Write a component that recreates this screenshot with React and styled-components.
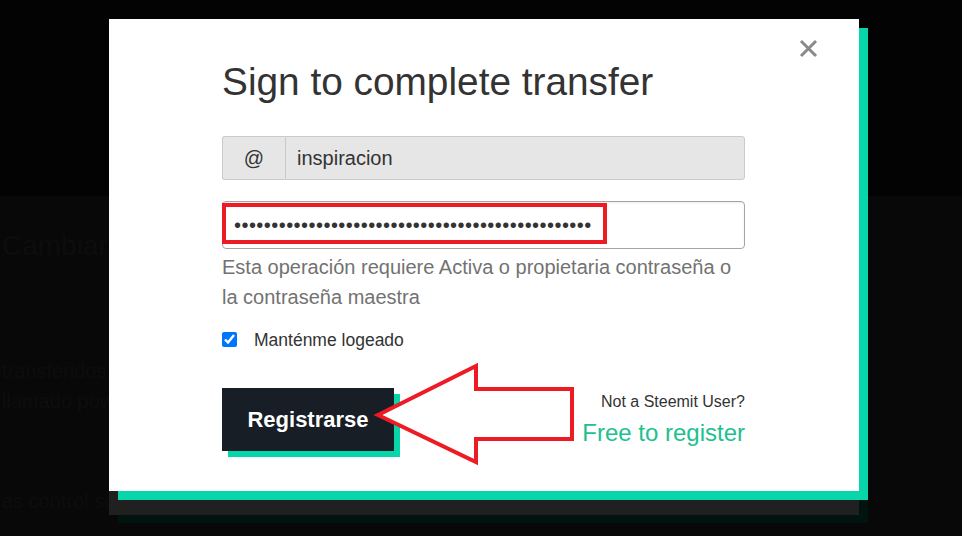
import React from "react";
import styled, { createGlobalStyle } from "styled-components";

const GlobalStyle = createGlobalStyle`
  html, body { margin: 0; padding: 0; background: #050505; }
  body { font-family: "Liberation Sans", Arial, sans-serif; }
  * { box-sizing: border-box; }
`;

const Screen = styled.div`
  position: relative;
  width: 962px;
  height: 536px;
  overflow: hidden;
  background: #080808;
`;

const PageHeader = styled.header`
  height: 196px;
  background: #030303;
`;

const PageBody = styled.main`
  display: flex;
  flex-direction: column;
  padding: 30px 0 0 2px;
  color: #0d0d0d;
`;

const BgHeading = styled.div`
  font-size: 28px;
  line-height: 40px;
  margin-bottom: 90px;
`;

const BgLine = styled.div`
  font-size: 20px;
  line-height: 30px;
  margin-top: ${(p) => p.$mt || 0}px;
`;

const Overlay = styled.div`
  position: absolute;
  inset: 0;
  padding: 19px 0 0 109px;
`;

const Modal = styled.div`
  position: relative;
  width: 750px;
  height: 472px;
  background: #ffffff;
  box-shadow: 9px 9px 0 #06d6a9, 0 24px 0 #202020, 9px 32px 0 #01140f;
  padding: 39px 114px 0 113px;
  display: flex;
  flex-direction: column;
`;

const CloseButton = styled.button`
  position: absolute;
  left: 690px;
  top: 20px;
  width: 19px;
  height: 19px;
  padding: 0;
  border: 0;
  background: transparent;
  display: flex;
  align-items: center;
  justify-content: center;
`;

const Title = styled.h1`
  margin: 0;
  font-size: 38.8px;
  line-height: 47px;
  font-weight: 400;
  color: #333333;
`;

const InputGroup = styled.div`
  margin-top: 31px;
  display: flex;
  height: 44px;
`;

const Addon = styled.span`
  width: 63px;
  display: flex;
  align-items: center;
  justify-content: center;
  background: #e6e6e6;
  border: 1px solid #cacaca;
  border-right: 0;
  border-radius: 3px 0 0 3px;
  font-size: 20px;
  color: #333;
`;

const Field = styled.input`
  flex: 1;
  min-width: 0;
  height: 100%;
  border: 1px solid #cacaca;
  border-radius: ${(p) => p.$radius || "0 3px 3px 0"};
  background: ${(p) => (p.disabled ? "#e6e6e6" : "#fff")};
  font-family: "Liberation Sans", Arial, sans-serif;
  font-size: 20px;
  color: #333;
  padding: 0 11px;
  outline: none;
`;

const PasswordWrap = styled.div`
  position: relative;
  margin-top: 21px;
  height: 48px;
  display: flex;
`;

const PasswordField = styled(Field)`
  border-color: #a5a5a5;
  letter-spacing: 0.45px;
  color: #333;
  box-shadow: inset 0 1px 2px rgba(0, 0, 0, 0.08);
`;

const Highlight = styled.div`
  position: absolute;
  left: 0;
  top: 2px;
  width: 385px;
  height: 41px;
  border: 4px solid #ed1c24;
  pointer-events: none;
`;

const Help = styled.p`
  margin: 3px 0 0;
  font-size: 20px;
  line-height: 30px;
  color: #727272;
`;

const CheckRow = styled.label`
  margin-top: 18px;
  height: 20px;
  display: flex;
  align-items: center;
  gap: 17px;
  font-size: 17.5px;
  color: #333;
`;

const Check = styled.input`
  width: 15px;
  height: 15px;
  margin: 0;
  accent-color: #0075ff;
  position: relative;
  top: -1px;
`;

const ActionRow = styled.div`
  position: relative;
  margin-top: 38px;
  display: flex;
  justify-content: space-between;
  align-items: center;
`;

const SubmitButton = styled.button`
  width: 172px;
  height: 63px;
  padding: 0;
  border: 0;
  background: #181e25;
  color: #fff;
  font-family: "Liberation Sans", Arial, sans-serif;
  font-weight: 700;
  font-size: 22px;
  box-shadow: 6px 6px 0 #06d6a9;
`;

const RegisterBox = styled.div`
  display: flex;
  flex-direction: column;
  align-items: flex-end;
`;

const NotUser = styled.div`
  font-size: 16px;
  line-height: 20px;
  color: #333;
`;

const FreeLink = styled.a`
  margin-top: 6px;
  font-size: 24px;
  line-height: 30px;
  color: #21c08f;
  text-decoration: none;
`;

const ArrowMark = styled.svg`
  position: absolute;
  left: 148px;
  top: -28px;
  pointer-events: none;
`;

export default function App() {
  return (
    <>
      <GlobalStyle />
      <Screen>
        <PageHeader />
        <PageBody>
          <BgHeading>Cambiar Co</BgHeading>
          <BgLine>transferidos a</BgLine>
          <BgLine>llamado pow</BgLine>
          <BgLine $mt={70}>ás control sob</BgLine>
        </PageBody>

        <Overlay>
          <Modal>
            <CloseButton aria-label="Cerrar">
              <svg width="19" height="19" viewBox="0 0 19 19">
                <path d="M2 2 L17 17 M17 2 L2 17" stroke="#8a8a8a" strokeWidth="3" />
              </svg>
            </CloseButton>
            <Title>Sign to complete transfer</Title>

            <InputGroup>
              <Addon>@</Addon>
              <Field disabled value="inspiracion" readOnly />
            </InputGroup>

            <PasswordWrap>
              <PasswordField
                type="password"
                $radius="4px"
                value={"x".repeat(48)}
                readOnly
              />
              <Highlight />
            </PasswordWrap>

            <Help>Esta operación requiere Activa o propietaria contraseña o la contraseña maestra</Help>

            <CheckRow>
              <Check type="checkbox" checked readOnly />
              Manténme logeado
            </CheckRow>

            <ActionRow>
              <SubmitButton>Registrarse</SubmitButton>
              <RegisterBox>
                <NotUser>Not a Steemit User?</NotUser>
                <FreeLink href="#">Free to register</FreeLink>
              </RegisterBox>
              <ArrowMark width="212" height="110" viewBox="0 0 212 110">
                <polygon
                  points="8,55 106,6 106,29 202,29 202,79 106,79 106,102"
                  fill="#ffffff"
                  stroke="#ed1c24"
                  strokeWidth="4"
                  strokeLinejoin="miter"
                />
              </ArrowMark>
            </ActionRow>
          </Modal>
        </Overlay>
      </Screen>
    </>
  );
}
